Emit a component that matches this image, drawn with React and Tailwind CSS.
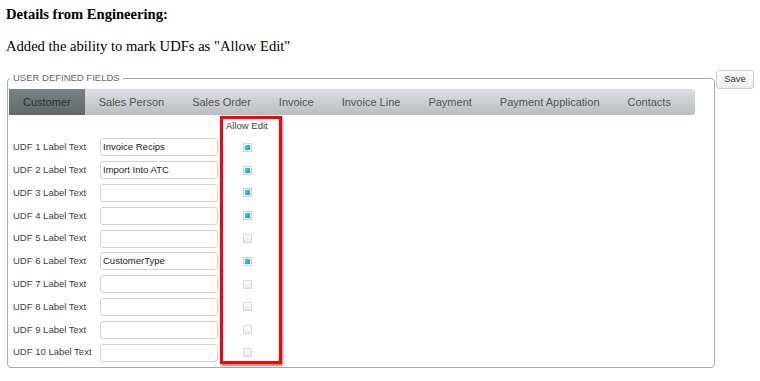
import React from 'react';

const TABS = ['Customer', 'Sales Person', 'Sales Order', 'Invoice', 'Invoice Line', 'Payment', 'Payment Application', 'Contacts'];

// Champs UDF : libellé, valeur, case cochée
const UDFS = [
  { n: 1, value: 'Invoice Recips', edit: true },
  { n: 2, value: 'Import Into ATC', edit: true },
  { n: 3, value: '', edit: true },
  { n: 4, value: '', edit: true },
  { n: 5, value: '', edit: false },
  { n: 6, value: 'CustomerType', edit: true },
  { n: 7, value: '', edit: false },
  { n: 8, value: '', edit: false },
  { n: 9, value: '', edit: false },
  { n: 10, value: '', edit: false },
];

function Check({ on }) {
  if (on) {
    return (
      <div className="w-[9px] h-[9px] border border-[#cfd3d4] bg-white p-[1px]">
        <div className="w-full h-full bg-linear-to-br from-[#43d2e8] to-[#0a9fc0]" />
      </div>
    );
  }
  return <div className="w-[9px] h-[9px] border border-[#d6d6d6] rounded-[1px] bg-linear-to-b from-white to-[#e9e9e9]" />;
}

export default function App() {
  return (
    <div className="w-[760px] h-[381px] overflow-hidden bg-white text-black">
      {/* Texte d'introduction */}
      <div className="font-['Liberation_Serif',serif] text-[14.6px] leading-[17px] pl-[6px]">
        <p className="font-bold pt-[6px]">Details from Engineering:</p>
        <p className="mt-[15px]">Added the ability to mark UDFs as "Allow Edit"</p>
      </div>

      <div className="flex items-start mt-[15px] pl-[7px] font-['Liberation_Sans',Arial,sans-serif]">
        <fieldset className="w-[708px] mt-[2px] border border-[#aaaaaa] rounded-[4px] pl-[1px] pb-[3px]">
          <legend className="ml-[1px] px-[3px] text-[9.5px] leading-[12px] text-[#666]">USER DEFINED FIELDS</legend>

          {/* Onglets */}
          <div className="mt-[5px] w-[686px] h-[26px] flex bg-linear-to-b from-[#dde0e1] to-[#b8bdc0] rounded-r-[3px] text-[11px]">
            {TABS.map((t, i) => (
              <div
                key={t}
                className={`h-full px-[14px] flex items-center ${i === 0 ? 'bg-linear-to-b from-[#7a8284] to-[#60686a] text-[#2a2f30]' : 'text-[#555]'}`}
              >
                {t}
              </div>
            ))}
          </div>

          {/* Champs */}
          <div className="flex mt-[1px]">
            <div className="pt-[20px] pl-[4px]">
              {UDFS.map((u) => (
                <div key={u.n} className="h-[22.8px] flex items-center">
                  <span className="w-[87px] text-[9.5px] text-[#3d3d3d]">UDF {u.n} Label Text</span>
                  <div className="w-[118px] h-[18px] border border-[#d3d3d3] rounded-[3px] flex items-center pl-[2px] text-[9.5px] text-[#222]">
                    {u.value}
                  </div>
                </div>
              ))}
            </div>

            <div className="ml-[2px] w-[62px] h-[248px] border-[3px] border-[#ff0000] shadow-[1px_2px_2px_rgba(0,0,0,0.45)] overflow-hidden">
              <div className="h-[17px] pl-[3px] pt-[1px] text-[9.5px] leading-[12px] text-[#3d3d3d]">Allow Edit</div>
              {UDFS.map((u) => (
                <div key={u.n} className="h-[22.8px] flex items-center pl-[20px]">
                  <Check on={u.edit} />
                </div>
              ))}
            </div>
          </div>
        </fieldset>

        <button className="ml-[1px] w-[38px] h-[19px] border border-[#cfcfcf] rounded-[3px] bg-linear-to-b from-white to-[#ececec] text-[9.5px] text-[#333] flex items-center justify-center">
          Save
        </button>
      </div>
    </div>
  );
}
